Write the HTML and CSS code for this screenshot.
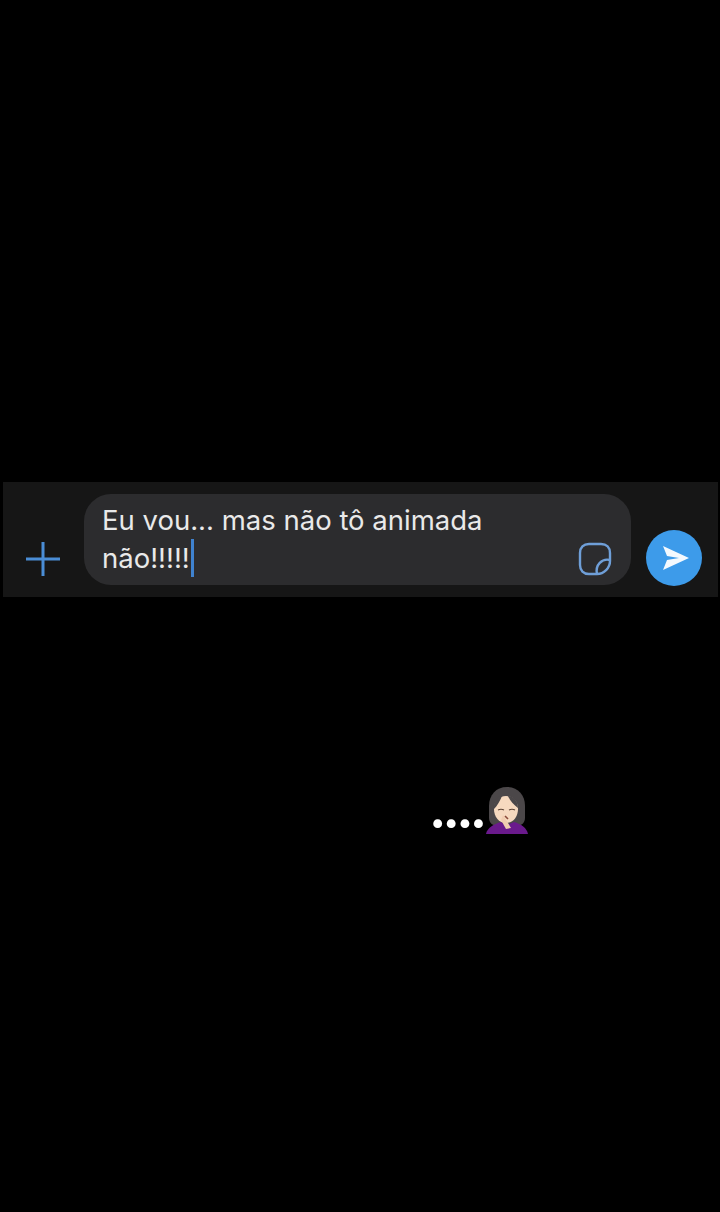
FILE: index.html
```html
<!DOCTYPE html>
<html lang="pt-BR">
<head>
  <meta charset="UTF-8">
  <title>Mensagem</title>
  <meta name="viewport" content="width=device-width, initial-scale=1.0">
  <link rel="stylesheet" href="styles.css">
</head>
<body>

<div class="composer">
  <svg class="plus" viewBox="0 0 36 36" width="36" height="36" aria-hidden="true">
    <path d="M18 1V35M1 18H35" fill="none" stroke="#4a8dd6" stroke-width="3"/>
  </svg>

  <div class="input-box">
    <p class="input-text">Eu vou... mas não tô animada não!!!!!<span class="caret"></span></p>
    <svg class="sticker" viewBox="0 0 34 34" width="34" height="34" aria-hidden="true">
      <path d="M11 2H23C28.500 2 32 5.500 32 11V19C32 26 26 32 19 32H11C5.500 32 2 28.500 2 23V11C2 5.500 5.500 2 11 2Z" fill="none" stroke="#6f9fd8" stroke-width="2.400"/>
      <path d="M32 18C24 16 17 23 19 32" fill="none" stroke="#6f9fd8" stroke-width="2.400"/>
    </svg>
  </div>

  <button class="send" type="button" aria-label="Enviar">
    <svg viewBox="0 0 28 26" width="28" height="26" aria-hidden="true">
      <path d="M1 1L27 13L1 25L5 15L17 13L5 11Z" fill="#f4f9fe"/>
    </svg>
  </button>
</div>

<div class="typing">
  <span class="dots">....</span>
  <svg class="emoji" viewBox="0 0 44 48" width="44" height="48" aria-hidden="true">
    <path d="M22 0C11 0 4 8 4 19V31C4 36 8 39 13 39H31C36 39 40 36 40 31V19C40 8 33 0 22 0Z" fill="#4b4749"/>
    <path d="M1 47C2 41 9 37 16 35L22 38L29 35C36 37 42 41 43 47Z" fill="#6a1a8c"/>
    <path d="M21 9C14 9 9 14 9 22C9 30 14 36 21 36C28 36 33 30 33 22C33 14 28 9 21 9Z" fill="#f6d9bf"/>
    <path d="M9 22C12 19 15 14 17 9C13 9 8 14 9 22ZM23 9C25 14 29 18 33 21C33 14 29 9 23 9Z" fill="#4b4749"/>
    <path d="M13 23C15 22 17 22 19 23M24 23C26 22 28 22 30 23" fill="none" stroke="#5c4436" stroke-width="1.200"/>
    <path d="M18 28L23 36L26 41L21 42L16 33Z" fill="#f1cdb0"/>
    <path d="M20 29L23 32" stroke="#8a4a3a" stroke-width="1.600"/>
  </svg>
</div>

</body>
</html>
```

FILE: styles.css
```css
body {
  font-family: Inter, "Liberation Sans", sans-serif;
  background: #000;
  margin: 0;
  height: 1212px;
  overflow: hidden;
}

.composer {
  display: flex;
  align-items: flex-end;
  height: 115px;
  box-sizing: border-box;
  margin: 482px 2px 0 3px;
  padding: 12px 16px 12px 22px;
  background: #161616;
}

.plus {
  flex: none;
  margin: 0 23px 8px 0;
}

.input-box {
  flex: none;
  position: relative;
  width: 547px;
  height: 91px;
  box-sizing: border-box;
  padding: 7px 18px;
  background: #2c2c2e;
  border-radius: 27px;
}

.input-text {
  margin: 0;
  width: 420px;
  font-size: 27.500px;
  line-height: 38px;
  color: #e9e9e9;
}

.caret {
  display: inline-block;
  width: 3px;
  height: 38px;
  margin-left: 1px;
  vertical-align: -9px;
  background: #3f82cf;
}

.sticker {
  position: absolute;
  right: 19px;
  bottom: 9px;
}

.send {
  flex: none;
  display: flex;
  align-items: center;
  justify-content: center;
  width: 56px;
  height: 56px;
  margin: 0 0 -1px 15px;
  padding: 0 0 0 3px;
  border: none;
  border-radius: 50%;
  background: #3d9bea;
}

.typing {
  display: flex;
  align-items: flex-end;
  margin: 190px 0 0 429px;
}

.dots {
  margin-bottom: 5px;
  font-size: 52px;
  font-weight: 700;
  line-height: 40px;
  letter-spacing: -3.800px;
  color: #fff;
}

.emoji {
  margin-left: 2px;
}
```
